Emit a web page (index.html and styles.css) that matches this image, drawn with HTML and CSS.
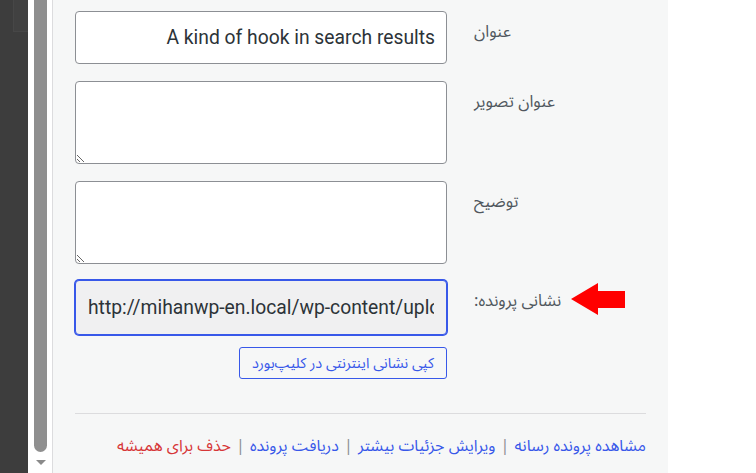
FILE: index.html
```html
<!doctype html>
<html lang="fa">
<head>
  <meta charset="utf-8">
  <title>جزئیات پیوست</title>
  <link rel="stylesheet" href="styles.css">
</head>
<body>

  <div class="screen">
    <div class="backdrop">
      <div class="backdrop-box"></div>
    </div>
    <div class="scrollbar">
      <div class="thumb"></div>
      <div class="arrow-down"></div>
    </div>

    <div class="side-info" dir="rtl">
      <div class="attachment-details">
        <div class="setting">
          <label class="name" for="att-title">عنوان</label>
          <div class="field">
            <input id="att-title" class="text-input" type="text" value="A kind of hook in search results">
          </div>
        </div>
        <div class="setting">
          <label class="name" for="att-caption">عنوان تصویر</label>
          <div class="field">
            <textarea id="att-caption" class="text-area"></textarea>
          </div>
        </div>
        <div class="setting">
          <label class="name" for="att-desc">توضیح</label>
          <div class="field">
            <textarea id="att-desc" class="text-area"></textarea>
          </div>
        </div>
        <div class="setting setting-url">
          <label class="name" for="att-url">نشانی پرونده:
            <svg class="pointer" width="54" height="32" viewBox="0 0 54 32">
              <polygon points="0,16 27,0 27,8 54,8 54,25 27,25 27,32" fill="#f00"/>
            </svg>
          </label>
          <div class="field">
            <input id="att-url" class="url-input" type="text" dir="ltr" readonly value="http://mihanwp-en.local/wp-content/uploads/2023/05/A-kind-of-hook-in-search-results.jpg">
            <div class="copy-row">
              <button class="button-small" type="button">کپی نشانی اینترنتی در کلیپ‌بورد</button>
            </div>
          </div>
        </div>
      </div>

      <div class="actions">
        <a href="#" class="view">مشاهده پرونده رسانه</a>
        <span class="sep">|</span>
        <a href="#">ویرایش جزئیات بیشتر</a>
        <span class="sep">|</span>
        <a href="#">دریافت پرونده</a>
        <span class="sep">|</span>
        <a href="#" class="delete">حذف برای همیشه</a>
      </div>
    </div>
  </div>

</body>
</html>
```

FILE: styles.css
```css
* {
    margin: 0;
    padding: 0;
    box-sizing: border-box;
}
html, body {
    height: 100%;
}
body {
    font-family: "Noto Sans Arabic", "DejaVu Sans", Roboto, sans-serif;
    background: #fff;
    overflow: hidden;
}
.screen {
    display: flex;
    height: 100%;
}
/* left page backdrop + scrollbar */
.backdrop {
    width: 28px;
    background: #3d3d3d;
    flex-shrink: 0;
}
.backdrop-box {
    margin-left: 13px;
    height: 32px;
    border-left: 1px solid #474747;
    border-bottom: 1px solid #474747;
    background: #414141;
}
.scrollbar {
    width: 24px;
    background: #fff;
    flex-shrink: 0;
    display: flex;
    flex-direction: column;
    align-items: center;
}
.thumb {
    width: 13px;
    height: 452px;
    background: #8f8f8f;
    border-radius: 0 0 7px 7px;
    margin-left: 1px;
}
.arrow-down {
    margin-top: 8px;
    margin-left: 1px;
    width: 0;
    height: 0;
    border-left: 5px solid transparent;
    border-right: 5px solid transparent;
    border-top: 5px solid #8a8a8a;
}
/* sidebar of the media modal */
.side-info {
    width: 616px;
    flex-shrink: 0;
    background: #f6f7f7;
    border-left: 1px solid #dcdcde;
    padding: 11px 22px 0 22px;
}
.setting {
    display: flex;
    gap: 27px;
    margin-bottom: 17px;
}
.setting .name {
    flex: 1;
    text-align: left;
    padding-top: 10px;
    font-size: 16.5px;
    line-height: 21px;
    color: #50575e;
}
.setting .field {
    width: 372px;
    flex-shrink: 0;
}
.text-input,
.text-area,
.url-input {
    display: block;
    width: 100%;
    border: 1px solid #8c8f94;
    border-radius: 4px;
    background: #fff;
    color: #2c3338;
    font-family: Roboto, "Noto Sans", sans-serif;
    font-size: 19.3px;
    outline: none;
}
.text-input {
    height: 53px;
    padding: 0 11px;
}
.text-area {
    height: 83px;
    padding: 6px 11px;
    resize: vertical;
}
.setting-url {
    margin-top: -1px;
}
.setting-url .name {
    position: relative;
}
.pointer {
    position: absolute;
    left: 97px;
    top: 3px;
}
.url-input {
    height: 55px;
    padding: 0 12px;
    background: #f0f0f1;
    border-color: #3858e9;
    box-shadow: 0 0 0 1px #3858e9;
    text-align: left;
}
.copy-row {
    margin-top: 12px;
    display: flex;
}
.button-small {
    height: 32px;
    padding: 0 12px;
    border: 1px solid #3858e9;
    border-radius: 3px;
    background: #f6f7f7;
    color: #3858e9;
    font-family: "Noto Sans Arabic", "DejaVu Sans", sans-serif;
    font-size: 14.5px;
    cursor: pointer;
}
.actions {
    margin-top: 34px;
    border-top: 1px solid #dcdcde;
    padding-top: 22px;
    font-size: 16px;
    line-height: 21px;
    color: #8c8f94;
}
.actions a {
    color: #3858e9;
    text-decoration: none;
}
.actions a.delete {
    color: #d63638;
}
.actions .sep {
    margin: 0 1px;
}
```
